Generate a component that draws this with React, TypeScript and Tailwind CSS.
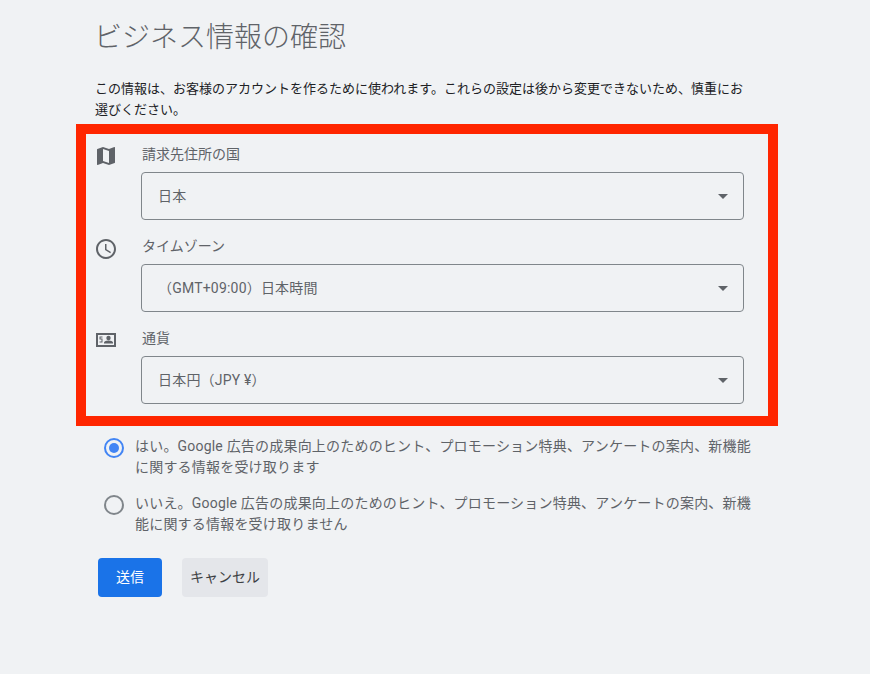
const font = "font-['Roboto','Noto_Sans_CJK_JP',sans-serif]";

const MapIcon = () => (
  <svg width="24" height="24" viewBox="0 0 24 24" fill="#5f6368">
    <path d="M20.5 3l-.16.03L15 5.1 9 3 3.36 4.9c-.21.07-.36.25-.36.48V20.5c0 .28.22.5.5.5l.16-.03L9 18.9l6 2.1 5.64-1.9c.21-.07.36-.25.36-.48V3.5c0-.28-.22-.5-.5-.5zM15 19l-6-2.11V5l6 2.11V19z" />
  </svg>
);

const ClockIcon = () => (
  <svg className="mt-px" width="24" height="24" viewBox="0 0 24 24" fill="#5f6368">
    <path d="M11.99 2C6.47 2 2 6.48 2 12s4.47 10 9.99 10C17.52 22 22 17.52 22 12S17.52 2 11.99 2zM12 20c-4.42 0-8-3.58-8-8s3.58-8 8-8 8 3.58 8 8-3.58 8-8 8z" />
    <path d="M12.5 7H11v6l5.25 3.15.75-1.23-4.5-2.67z" />
  </svg>
);

const CurrencyIcon = () => (
  <svg width="24" height="24" viewBox="0 0 24 24" fill="#5f6368">
    <path fillRule="evenodd" d="M2 5h20v14H2zM4 7v10h16V7z" />
    <path d="M5.500 8.500h3v1h-2v1h2v4h-3v-1h2v-2h-2z" />
    <circle cx="14.500" cy="10" r="2.200" />
    <path d="M10 15.500v-1c0-1.300 3-2 4.500-2s4.500.7 4.500 2v1z" />
  </svg>
);

const Field = ({ icon, label, value }: { icon: React.ReactNode; label: string; value: string }) => (
  <div className="flex h-[92px]">
    <div className="w-[55px] pl-[8px] pt-[10px]">{icon}</div>
    <div className="flex-1">
      <div className="h-[38px] pt-[10px] pl-[1px] text-[14px] leading-[20px] text-[#5f6368]">{label}</div>
      <div className="flex h-[48px] items-center justify-between rounded border border-[#80868b] pl-[16px] pr-[15px] text-[14px] tracking-[0.2px] text-[#5f6368]">
        <span>{value}</span>
        <span className="h-0 w-0 border-x-[5px] border-t-[5px] border-x-transparent border-t-[#5f6368]" />
      </div>
    </div>
  </div>
);

const Radio = ({ checked, lines }: { checked: boolean; lines: string[] }) => (
  <div className="flex h-[57px] items-start">
    <span
      className={`mt-[3px] flex h-[20px] w-[20px] items-center justify-center rounded-full border-2 ${
        checked ? "border-[#4285f4]" : "border-[#80868b]"
      }`}
    >
      {checked && <span className="h-[10px] w-[10px] rounded-full bg-[#4285f4]" />}
    </span>
    <div className="ml-[11px] mt-px whitespace-nowrap text-[14px] leading-[21px] tracking-[0.2px] text-[#5f6368]">
      {lines.map((l) => (
        <div key={l}>{l}</div>
      ))}
    </div>
  </div>
);

export default function App() {
  return (
    <div className={`${font} min-h-[674px] w-[870px] overflow-hidden bg-[#f0f2f4]`}>
      <div className="pl-[76px] pt-[20px]">
        <div className="ml-[18px] text-[28px] font-light leading-[36px] text-[#5f6368]">ビジネス情報の確認</div>
        <div className="ml-[19px] mt-[22px] w-[660px] text-[13px] leading-[21px] text-[#202124]">
          この情報は、お客様のアカウントを作るために使われます。これらの設定は後から変更できないため、慎重にお選びください。
        </div>
        <div className="mt-[4px] h-[302px] w-[702px] border-[10px] border-[#ff2600] pr-[24px]">
          <Field icon={<MapIcon />} label="請求先住所の国" value="日本" />
          <Field icon={<ClockIcon />} label="タイムゾーン" value="（GMT+09:00）日本時間" />
          <Field icon={<CurrencyIcon />} label="通貨" value="日本円（JPY ¥）" />
        </div>
        <div className="ml-[28px] mt-[9px]">
          <Radio
            checked
            lines={["はい。Google 広告の成果向上のためのヒント、プロモーション特典、アンケートの案内、新機能", "に関する情報を受け取ります"]}
          />
          <Radio
            checked={false}
            lines={["いいえ。Google 広告の成果向上のためのヒント、プロモーション特典、アンケートの案内、新機", "能に関する情報を受け取りません"]}
          />
        </div>
        <div className="ml-[22px] mt-[9px] flex gap-[20px]">
          <button className="h-[39px] w-[64px] rounded bg-[#1a73e8] text-[14px] text-white">送信</button>
          <button className="h-[39px] w-[86px] rounded bg-[#e4e6ea] text-[14px] text-[#3c4043]">キャンセル</button>
        </div>
      </div>
    </div>
  );
}
